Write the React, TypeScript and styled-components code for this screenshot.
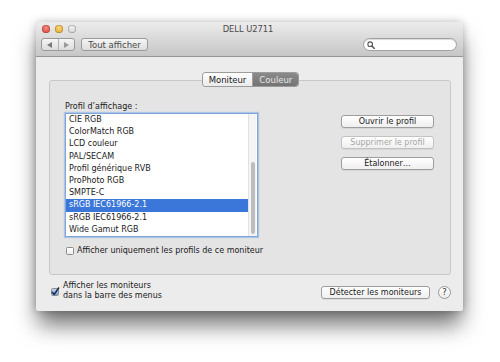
import styled, { createGlobalStyle } from "styled-components";

const GlobalStyle = createGlobalStyle`
  html, body {
    margin: 0;
    padding: 0;
    background: #ffffff;
  }
  body {
    font-family: "DejaVu Sans", "Liberation Sans", sans-serif;
    font-size: 8px;
    color: #1a1a1a;
  }
`;

const Page = styled.div`
  width: 500px;
  height: 362px;
  padding: 22px 0 0 36px;
  box-sizing: border-box;
`;

const Window = styled.div`
  width: 427px;
  height: 289px;
  background: #ececec;
  border-radius: 4px 4px 2px 2px;
  box-shadow: 0 16px 22px -2px rgba(0, 0, 0, 0.55), 0 0 8px rgba(0, 0, 0, 0.25);
  display: flex;
  flex-direction: column;
  overflow: hidden;
`;

const TitleBar = styled.div`
  height: 32px;
  background: linear-gradient(#ececec, #c6c6c6);
  border-bottom: 1px solid #969696;
  display: flex;
  flex-direction: column;
  padding: 2px 6px 0 5px;
  box-sizing: content-box;
`;

const TitleRow = styled.div`
  height: 9px;
  display: flex;
  align-items: center;
`;

const Lights = styled.div`
  display: flex;
  gap: 5px;
  padding-left: 1px;
`;

const Light = styled.span<{ $c: string; $d: string }>`
  width: 8px;
  height: 8px;
  border-radius: 50%;
  background: radial-gradient(circle at 50% 35%, ${(p) => p.$c}, ${(p) => p.$d});
  box-shadow: inset 0 0 0 0.5px rgba(0, 0, 0, 0.3);
`;

const Title = styled.div`
  flex: 1;
  text-align: center;
  margin-right: 37px;
  font-size: 8.3px;
  color: #4a4a4a;
`;

const ToolRow = styled.div`
  margin-top: 5px;
  height: 13px;
  display: flex;
  align-items: center;
`;

const Segmented = styled.div`
  width: 34px;
  height: 13px;
  box-sizing: border-box;
  border: 1px solid #9a9a9a;
  border-radius: 3px;
  background: linear-gradient(#f6f6f6, #dcdcdc);
  display: flex;
`;

const SegPart = styled.div<{ $left?: boolean }>`
  flex: 1;
  display: flex;
  align-items: center;
  justify-content: center;
  ${(p) => (p.$left ? "border-right: 1px solid #b0b0b0;" : "")}
`;

const ToolButton = styled.div`
  margin-left: 6px;
  width: 67px;
  height: 13px;
  box-sizing: border-box;
  border: 1px solid #9a9a9a;
  border-radius: 3px;
  background: linear-gradient(#f6f6f6, #dcdcdc);
  color: #4a4a4a;
  font-size: 8.5px;
  display: flex;
  align-items: center;
  justify-content: center;
`;

const Search = styled.div`
  margin-left: auto;
  width: 94px;
  height: 13px;
  box-sizing: border-box;
  border: 1px solid #a0a0a0;
  border-radius: 7px;
  background: #ffffff;
  box-shadow: inset 0 1px 1px rgba(0, 0, 0, 0.15);
  display: flex;
  align-items: center;
  padding-left: 3px;
`;

const Content = styled.div`
  flex: 1;
  padding: 16px 12px 0 13px;
  display: flex;
  flex-direction: column;
`;

const Tabs = styled.div`
  align-self: center;
  margin-left: 1px;
  display: flex;
  height: 13px;
  position: relative;
  z-index: 1;
  border-radius: 3px;
  box-shadow: 0 0 0 1px #9c9c9c;
`;

const Tab = styled.div<{ $active?: boolean }>`
  padding: 0 6px;
  display: flex;
  align-items: center;
  font-size: 8.5px;
  background: ${(p) =>
    p.$active ? "linear-gradient(#8a8a8a, #747474)" : "linear-gradient(#ffffff, #ebebeb)"};
  color: ${(p) => (p.$active ? "#e6e6e6" : "#1a1a1a")};
  border-radius: ${(p) => (p.$active ? "0 3px 3px 0" : "3px 0 0 3px")};
  ${(p) => (p.$active ? "" : "border-right: 1px solid #a0a0a0;")}
`;

const GroupBox = styled.div`
  margin-top: -6px;
  height: 195px;
  box-sizing: border-box;
  border: 1px solid #c8c8c8;
  border-radius: 3px;
  background: #e4e4e4;
  padding: 21px 16px 0 15px;
  display: flex;
`;

const LeftCol = styled.div`
  width: 193px;
  display: flex;
  flex-direction: column;
`;

const Label = styled.div`
  height: 9px;
  line-height: 9px;
  margin-bottom: 2px;
`;

const ListBox = styled.div`
  height: 124px;
  box-sizing: border-box;
  border: 1px solid #7ea4d8;
  box-shadow: 0 0 1px 1px rgba(110, 160, 230, 0.45);
  background: #ffffff;
  display: flex;
  padding: 0 1px 0 0;
`;

const Rows = styled.div`
  flex: 1;
  display: flex;
  flex-direction: column;
`;

const Row = styled.div<{ $sel?: boolean }>`
  height: 12.2px;
  line-height: 12.2px;
  padding-left: 3px;
  white-space: nowrap;
  background: ${(p) => (p.$sel ? "#3b77d8" : "transparent")};
  color: ${(p) => (p.$sel ? "#ffffff" : "#1a1a1a")};
`;

const Track = styled.div`
  width: 8px;
  background: #f4f4f4;
  border-left: 1px solid #e2e2e2;
  display: flex;
  flex-direction: column;
  align-items: center;
  padding: 48px 0 2px;
  box-sizing: border-box;
`;

const Thumb = styled.div`
  width: 4px;
  flex: 1;
  border-radius: 2px;
  background: #bdbdbd;
`;

const CheckRow = styled.label<{ $top?: number; $gap?: number }>`
  display: flex;
  align-items: center;
  gap: ${(p) => p.$gap ?? 3}px;
  margin-top: ${(p) => p.$top ?? 0}px;
  padding-left: 1px;
  white-space: nowrap;
`;

const Box = styled.span<{ $checked?: boolean }>`
  width: 8px;
  height: 8px;
  box-sizing: border-box;
  border: 1px solid #8d8d8d;
  border-radius: 1.5px;
  background: ${(p) =>
    p.$checked ? "linear-gradient(#bcd6f5, #6d9fdc)" : "linear-gradient(#ffffff, #ececec)"};
  display: flex;
  align-items: center;
  justify-content: center;
  flex-shrink: 0;
`;

const RightCol = styled.div`
  margin-left: auto;
  padding-top: 13px;
  display: flex;
  flex-direction: column;
  gap: 8px;
`;

const Button = styled.div<{ $w: number; $disabled?: boolean }>`
  width: ${(p) => p.$w}px;
  height: 13px;
  box-sizing: border-box;
  border: 1px solid ${(p) => (p.$disabled ? "#c2c2c2" : "#9d9d9d")};
  border-radius: 3px;
  background: linear-gradient(#ffffff, #efefef);
  box-shadow: 0 1px 0 rgba(0, 0, 0, 0.06);
  color: ${(p) => (p.$disabled ? "#a6a6a6" : "#1a1a1a")};
  display: flex;
  align-items: center;
  justify-content: center;
  white-space: nowrap;
`;

const DetectButton = styled(Button)`
  margin-left: auto;
`;

const BottomRow = styled.div`
  flex: 1;
  display: flex;
  align-items: center;
  padding-bottom: 2px;
  padding-left: 1px;
`;

const TwoLines = styled.div`
  line-height: 10.5px;
  margin-top: -2px;
`;

const Help = styled.div`
  margin-left: 8px;
  width: 13px;
  height: 13px;
  box-sizing: border-box;
  border-radius: 50%;
  border: 1px solid #9a9a9a;
  background: linear-gradient(#ffffff, #ececec);
  display: flex;
  align-items: center;
  justify-content: center;
  font-size: 8.5px;
  color: #333;
`;

const profiles = [
  "CIE RGB",
  "ColorMatch RGB",
  "LCD couleur",
  "PAL/SECAM",
  "Profil générique RVB",
  "ProPhoto RGB",
  "SMPTE-C",
  "sRGB IEC61966-2.1",
  "sRGB IEC61966-2.1",
  "Wide Gamut RGB",
];

const App = () => {
  return (
    <Page>
      <GlobalStyle />
      <Window>
        <TitleBar>
          <TitleRow>
            <Lights>
              <Light $c="#ff8c84" $d="#d0352b" />
              <Light $c="#ffd777" $d="#d99a16" />
              <Light $c="#f2f2f2" $d="#c3c3c3" />
            </Lights>
            <Title>DELL U2711</Title>
          </TitleRow>
          <ToolRow>
            <Segmented>
              <SegPart $left>
                <svg width="5" height="6" viewBox="0 0 5 6">
                  <path d="M0 3 L5 0 L5 6 Z" fill="#7a7a7a" />
                </svg>
              </SegPart>
              <SegPart>
                <svg width="5" height="6" viewBox="0 0 5 6">
                  <path d="M5 3 L0 0 L0 6 Z" fill="#9a9a9a" />
                </svg>
              </SegPart>
            </Segmented>
            <ToolButton>Tout afficher</ToolButton>
            <Search>
              <svg width="8" height="8" viewBox="0 0 8 8">
                <circle cx="3.2" cy="3.2" r="2.3" fill="none" stroke="#555" strokeWidth="1.1" />
                <path d="M4.9 4.9 L7.4 7.4" stroke="#555" strokeWidth="1.4" strokeLinecap="round" />
              </svg>
            </Search>
          </ToolRow>
        </TitleBar>
        <Content>
          <Tabs>
            <Tab>Moniteur</Tab>
            <Tab $active>Couleur</Tab>
          </Tabs>
          <GroupBox>
            <LeftCol>
              <Label>Profil d’affichage :</Label>
              <ListBox>
                <Rows>
                  {profiles.map((name, i) => (
                    <Row key={i} $sel={i === 7}>
                      {name}
                    </Row>
                  ))}
                </Rows>
                <Track>
                  <Thumb />
                </Track>
              </ListBox>
              <CheckRow $top={9}>
                <Box />
                Afficher uniquement les profils de ce moniteur
              </CheckRow>
            </LeftCol>
            <RightCol>
              <Button $w={93}>Ouvrir le profil</Button>
              <Button $w={93} $disabled>
                Supprimer le profil
              </Button>
              <Button $w={93}>Étalonner…</Button>
            </RightCol>
          </GroupBox>
          <BottomRow>
            <CheckRow $gap={4}>
              <Box $checked>
                <svg width="8" height="8" viewBox="0 0 8 8" style={{ overflow: "visible" }}>
                  <path d="M1 4 L3.2 6.4 L8 -0.5" fill="none" stroke="#1d2a44" strokeWidth="1.5" />
                </svg>
              </Box>
              <TwoLines>
                Afficher les moniteurs
                <br />
                dans la barre des menus
              </TwoLines>
            </CheckRow>
            <DetectButton $w={109}>Détecter les moniteurs</DetectButton>
            <Help>?</Help>
          </BottomRow>
        </Content>
      </Window>
    </Page>
  );
};

export default App;
